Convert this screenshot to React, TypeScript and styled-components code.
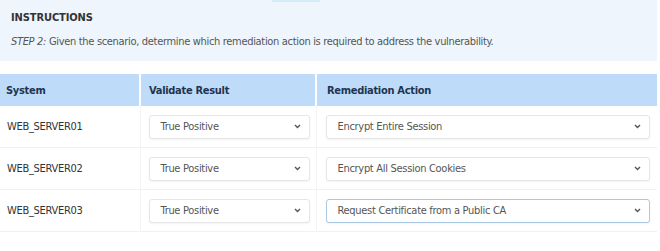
import * as React from 'react';
import styled, { createGlobalStyle } from 'styled-components';

const GlobalStyle = createGlobalStyle`
  body {
    margin: 0;
    background: #ffffff;
    font-family: "DejaVu Sans Condensed", "DejaVu Sans", sans-serif;
  }
`;

const Page = styled.div`
  width: 660px;
  height: 251px;
  overflow: hidden;
  background: #ffffff;
`;

const Instructions = styled.section`
  position: relative;
  width: 657px;
  height: 61px;
  box-sizing: border-box;
  padding: 11px 11px 0;
  background: #eef5fc;
`;

const TopTab = styled.div`
  position: absolute;
  top: 0;
  left: 272px;
  width: 48px;
  height: 2px;
  background: #d4eef8;
`;

const Heading = styled.h3`
  margin: 0;
  font-size: 11px;
  font-weight: bold;
  color: #333;
  letter-spacing: -0.1px;
`;

const StepText = styled.p`
  margin: 11px 0 0;
  font-size: 11px;
  letter-spacing: -0.32px;
  color: #555;
  em {
    font-style: italic;
  }
`;

const Table = styled.table`
  margin-top: 13px;
  width: 657px;
  border-collapse: collapse;
  table-layout: fixed;
`;

const HeadCell = styled.th`
  height: 32px;
  padding: 0 8px;
  text-align: left;
  background: #bedcf9;
  color: #1f344f;
  font-size: 11px;
  letter-spacing: -0.3px;
  font-weight: bold;
  border-left: 2px solid #fff;
  &:first-child {
    border-left: none;
    padding-left: 6px;
  }
  &:last-child {
    padding-left: 10px;
  }
`;

const Row = styled.tr`
  border-bottom: 1px solid #f1f1f1;
`;

const Cell = styled.td`
  height: 41px;
  padding: 0 8px;
  font-size: 11px;
  letter-spacing: -0.3px;
  color: #333;
  border-left: 1px solid #f4f4f4;
  &:first-child {
    border-left: none;
    padding-left: 7px;
  }
  &:last-child {
    padding-left: 9px;
  }
`;

const SelectBox = styled.div<{ $focus?: boolean }>`
  display: flex;
  align-items: center;
  justify-content: space-between;
  height: 24px;
  box-sizing: border-box;
  padding: 0 8px 0 11px;
  border: 1px solid ${(p) => (p.$focus ? '#a9c8e4' : '#e6e6e6')};
  border-radius: 3px;
  background: #fff;
  box-shadow: 0 1px 2px rgba(0, 0, 0, 0.05);
  color: #555;
  font-size: 11px;
  letter-spacing: -0.3px;
`;

const Chevron = () => (
  <svg width="7" height="5" viewBox="0 0 7 5">
    <path d="M1 1 L3.5 3.5 L6 1" fill="none" stroke="#555" strokeWidth="1.4" />
  </svg>
);

const Select = ({ value, focus, width }: { value: string; focus?: boolean; width: number }) => (
  <SelectBox $focus={focus} style={{ width }}>
    <span>{value}</span>
    <Chevron />
  </SelectBox>
);

const rows = [
  { system: 'WEB_SERVER01', result: 'True Positive', action: 'Encrypt Entire Session' },
  { system: 'WEB_SERVER02', result: 'True Positive', action: 'Encrypt All Session Cookies' },
  { system: 'WEB_SERVER03', result: 'True Positive', action: 'Request Certificate from a Public CA', focus: true },
];

export default function App() {
  return (
    <Page>
      <GlobalStyle />
      <Instructions>
        <TopTab />
        <Heading>INSTRUCTIONS</Heading>
        <StepText>
          <em>STEP 2:</em> Given the scenario, determine which remediation action is required to address the vulnerability.
        </StepText>
      </Instructions>
      <Table>
        <colgroup>
          <col style={{ width: 140 }} />
          <col style={{ width: 176 }} />
          <col style={{ width: 341 }} />
        </colgroup>
        <thead>
          <tr>
            <HeadCell>System</HeadCell>
            <HeadCell>Validate Result</HeadCell>
            <HeadCell>Remediation Action</HeadCell>
          </tr>
        </thead>
        <tbody>
          {rows.map((r) => (
            <Row key={r.system}>
              <Cell>{r.system}</Cell>
              <Cell>
                <Select value={r.result} width={161} />
              </Cell>
              <Cell>
                <Select value={r.action} focus={r.focus} width={324} />
              </Cell>
            </Row>
          ))}
        </tbody>
      </Table>
    </Page>
  );
}
